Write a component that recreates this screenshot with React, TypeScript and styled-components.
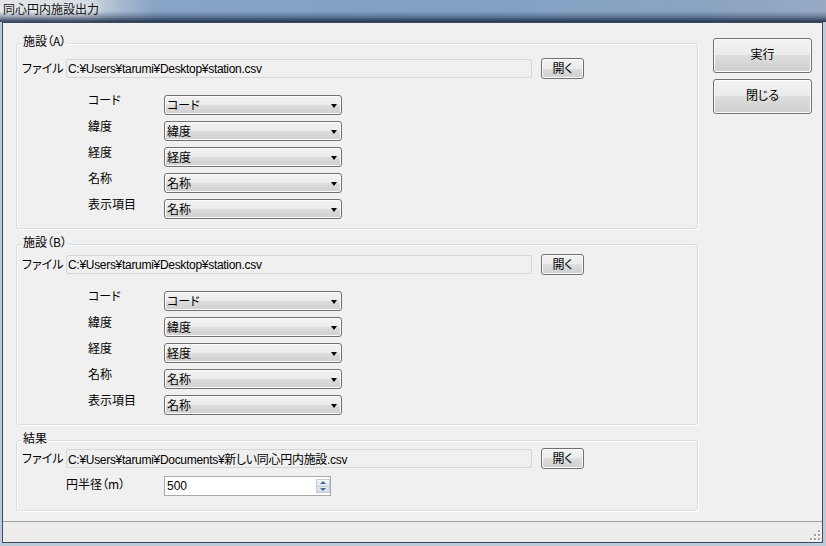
import React from "react";
import styled, { createGlobalStyle } from "styled-components";

const Global = createGlobalStyle`
  html, body { margin: 0; padding: 0; }
  body {
    width: 826px; height: 546px; overflow: hidden;
    font-family: "Noto Sans CJK JP", "Liberation Sans", sans-serif;
    font-size: 12px; color: #000;
    font-feature-settings: "palt";
  }
  button { font-feature-settings: "palt"; }
`;

const Window = styled.div`
  width: 826px; height: 546px; box-sizing: border-box;
  display: flex; flex-direction: column;
  background: #bccada;
`;

const TitleBar = styled.div`
  height: 22px; flex: none; display: flex; align-items: flex-start;
  padding: 1px 0 0 3px; box-sizing: border-box;
  background:
    linear-gradient(to bottom, rgba(40,60,95,0) 0, rgba(40,60,95,0) 11px, rgba(40,60,95,0.35) 16px, rgba(22,36,60,0.85) 22px),
    linear-gradient(to right, #e3e6ea 0, #d5dbe2 85px, #a9bbd0 118px, #87a3c6 155px, #82a0c4 450px, #89a3c2 700px, #97abc4 826px);
`;

const TitleText = styled.span`
  font-size: 12px; line-height: 16px; color: #111;
  font-feature-settings: normal;
  text-shadow: 0 0 6px rgba(255,255,255,0.7);
`;

const ClientFrame = styled.div`
  flex: 1; min-height: 0; margin: 0 3px 3px 2px;
  border: 1px solid #3c4c63; background: #f0f0f0;
  display: flex; flex-direction: column;
`;

const Main = styled.div`
  flex: 1; min-height: 0; display: flex; gap: 15px;
  padding: 20px 10px 0 13px;
`;

const LeftCol = styled.div`
  width: 682px; flex: none; display: flex; flex-direction: column;
`;

const RightCol = styled.div`
  width: 99px; flex: none; display: flex; flex-direction: column; gap: 6px;
  margin-top: -5px;
`;

const PushButton = styled.button<{ $w: number; $h: number; $pb: number }>`
  width: ${(p) => p.$w}px; height: ${(p) => p.$h}px; flex: none;
  box-sizing: border-box; border: 1px solid #707070; border-radius: 3px;
  background: linear-gradient(to bottom, #f2f2f2 0%, #ebebeb 50%, #dddddd 50%, #cfcfcf 100%);
  box-shadow: inset 0 0 0 1px #fcfcfc;
  font-family: "Noto Sans CJK JP", "Liberation Sans", sans-serif;
  font-size: 12px; line-height: 14px; color: #000;
  padding: 0 0 ${(p) => p.$pb}px 0; margin: 0;
  display: flex; align-items: center; justify-content: center;
`;

const GroupBox = styled.section<{ $h: number; $mt: number }>`
  margin-top: ${(p) => p.$mt}px; height: ${(p) => p.$h}px; box-sizing: border-box;
  border: 1px solid #d5dfe5; border-radius: 3px;
  box-shadow: inset 1px 1px 0 #ffffff, 1px 1px 0 #ffffff;
  display: flex; flex-direction: column;
`;

const GroupTitle = styled.div`
  align-self: flex-start; margin: -10px 0 0 5px; padding: 0 1px;
  height: 14px; line-height: 14px; background: #f0f0f0;
`;

const FileRow = styled.div<{ $mt: number }>`
  display: flex; align-items: center; height: 21px;
  margin-top: ${(p) => p.$mt}px; padding-left: 5px;
`;

const RowLabel = styled.span<{ $w: number }>`
  width: ${(p) => p.$w}px; flex: none; line-height: 14px; white-space: nowrap;
  margin-top: -1px;
`;

const PathBox = styled.div`
  width: 466px; height: 19px; flex: none; box-sizing: border-box;
  border: 1px solid #d6d6d6; border-radius: 2px; background: #f0f0f0;
  display: flex; align-items: center; padding-left: 1px; margin-right: 9px;
  font-family: "Liberation Sans", "Noto Sans CJK JP", sans-serif;
  letter-spacing: -0.3px; white-space: nowrap; overflow: hidden;
`;

const FieldList = styled.div`
  display: flex; flex-direction: column; gap: 6px;
  margin-top: 16px; padding-left: 71px;
`;

const FieldRow = styled.div`
  display: flex; align-items: flex-start; height: 20px;
`;

const FieldLabel = styled.span<{ $w: number }>`
  width: ${(p) => p.$w}px; flex: none; line-height: 14px; margin-top: -2px;
  white-space: nowrap;
`;

const Combo = styled.div`
  width: 178px; height: 20px; box-sizing: border-box;
  border: 1px solid #707070; border-radius: 3px;
  background: linear-gradient(to bottom, #f2f2f2 0%, #ebebeb 50%, #dddddd 50%, #cfcfcf 100%);
  box-shadow: inset 0 0 0 1px #fcfcfc;
  display: flex; align-items: center; padding: 0 4px 0 2px;
`;

const ComboText = styled.span`
  flex: 1; line-height: 14px; white-space: nowrap;
`;

const ComboArrow = styled.span`
  width: 0; height: 0; margin-top: 1px;
  border-left: 3px solid transparent; border-right: 3px solid transparent;
  border-top: 4px solid #000;
`;

const NumRow = styled.div`
  display: flex; align-items: flex-start; height: 20px;
  margin-top: 7px; padding-left: 49px;
`;

const NumLabel = styled.span`
  width: 98px; flex: none; line-height: 14px; margin-top: 1px;
`;

const NumBox = styled.div`
  width: 167px; height: 20px; box-sizing: border-box;
  border: 1px solid #a9a9a9; background: #fff;
  display: flex; align-items: center; padding-left: 2px;
`;

const NumText = styled.span`
  flex: 1; font-family: "Liberation Sans", "Noto Sans CJK JP", sans-serif;
  line-height: 14px;
`;

const Spinner = styled.div`
  width: 14px; height: 14px; display: flex; flex-direction: column;
  border: 1px solid #c4ccd6; box-sizing: border-box; margin-right: 0;
`;

const SpinHalf = styled.div<{ $up?: boolean }>`
  flex: 1; display: flex; align-items: center; justify-content: center;
  background: ${(p) =>
    p.$up ? "linear-gradient(#f4f7fb, #dde6f0)" : "linear-gradient(#e3ebf4, #cfdbe8)"};
  border-bottom: ${(p) => (p.$up ? "1px solid #c4ccd6" : "none")};
`;

const SpinArrow = styled.span<{ $up?: boolean }>`
  width: 0; height: 0;
  border-left: 3px solid transparent; border-right: 3px solid transparent;
  ${(p) => (p.$up ? "border-bottom: 3px solid #4a6896;" : "border-top: 3px solid #4a6896;")}
`;

const StatusBar = styled.div`
  height: 20px; flex: none; border-top: 1px solid #a0a0a0;
  background: #efedeb; display: flex; justify-content: flex-end; align-items: flex-end;
`;

const Grip = styled.svg`
  margin: 0 1px 1px 0; display: block;
`;

const fields = ["コード", "緯度", "経度", "名称", "表示項目"];
const values = ["コード", "緯度", "経度", "名称", "名称"];

function FieldBlock() {
  return (
    <FieldList>
      {fields.map((f, i) => (
        <FieldRow key={f}>
          <FieldLabel $w={76}>{f}</FieldLabel>
          <Combo>
            <ComboText>{values[i]}</ComboText>
            <ComboArrow />
          </Combo>
        </FieldRow>
      ))}
    </FieldList>
  );
}

function FileLine({ path, mt }: { path: string; mt: number }) {
  return (
    <FileRow $mt={mt}>
      <RowLabel $w={44}>ファイル</RowLabel>
      <PathBox>{path}</PathBox>
      <PushButton $w={43} $h={21} $pb={2}>開く</PushButton>
    </FileRow>
  );
}

export default function App() {
  return (
    <>
      <Global />
      <Window>
        <TitleBar>
          <TitleText>同心円内施設出力</TitleText>
        </TitleBar>
        <ClientFrame>
          <Main>
            <LeftCol>
              <GroupBox $h={186} $mt={0}>
                <GroupTitle>施設（A）</GroupTitle>
                <FileLine path="C:¥Users¥tarumi¥Desktop¥station.csv" mt={10} />
                <FieldBlock />
              </GroupBox>
              <GroupBox $h={181} $mt={15}>
                <GroupTitle>施設（B）</GroupTitle>
                <FileLine path="C:¥Users¥tarumi¥Desktop¥station.csv" mt={5} />
                <FieldBlock />
              </GroupBox>
              <GroupBox $h={71} $mt={15}>
                <GroupTitle>結果</GroupTitle>
                <FileLine path="C:¥Users¥tarumi¥Documents¥新しい同心円内施設.csv" mt={3} />
                <NumRow>
                  <NumLabel>円半径（m）</NumLabel>
                  <NumBox>
                    <NumText>500</NumText>
                    <Spinner>
                      <SpinHalf $up>
                        <SpinArrow $up />
                      </SpinHalf>
                      <SpinHalf>
                        <SpinArrow />
                      </SpinHalf>
                    </Spinner>
                  </NumBox>
                </NumRow>
              </GroupBox>
            </LeftCol>
            <RightCol>
              <PushButton $w={99} $h={35} $pb={3}>実行</PushButton>
              <PushButton $w={99} $h={35} $pb={3}>閉じる</PushButton>
            </RightCol>
          </Main>
          <StatusBar>
            <Grip width="12" height="12" viewBox="0 0 12 12">
              {[
                [9, 1],
                [5, 5], [9, 5],
                [1, 9], [5, 9], [9, 9],
              ].map(([x, y]) => (
                <g key={`${x}-${y}`}>
                  <rect x={x + 1} y={y + 1} width="2" height="2" fill="#ffffff" />
                  <rect x={x} y={y} width="2" height="2" fill="#a3a3a3" />
                </g>
              ))}
            </Grip>
          </StatusBar>
        </ClientFrame>
      </Window>
    </>
  );
}
